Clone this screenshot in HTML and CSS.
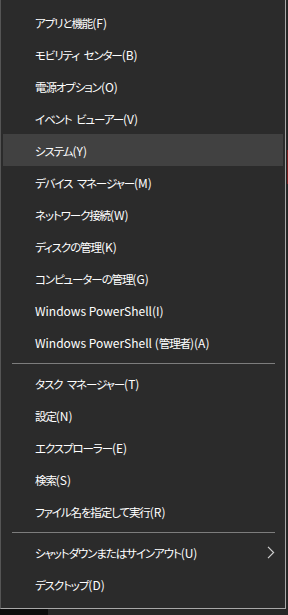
FILE: index.html
```html
<!DOCTYPE html>
<html lang="ja">
<head>
<meta charset="utf-8">
<title>Win+X menu</title>
<link rel="stylesheet" href="styles.css">
</head>
<body>
<div class="screen">
  <div class="menu">
    <ul class="group">
      <li class="item"><span class="label"><span class="j">アプリと機能</span>(F)</span></li>
      <li class="item"><span class="label"><span class="j">モビリティ センター</span>(B)</span></li>
      <li class="item"><span class="label"><span class="j">電源オプション</span>(O)</span></li>
      <li class="item"><span class="label"><span class="j">イベント ビューアー</span>(V)</span></li>
      <li class="item active"><span class="label"><span class="j">システム</span>(Y)</span></li>
      <li class="item"><span class="label"><span class="j">デバイス マネージャー</span>(M)</span></li>
      <li class="item"><span class="label"><span class="j">ネットワーク接続</span>(W)</span></li>
      <li class="item"><span class="label"><span class="j">ディスクの管理</span>(K)</span></li>
      <li class="item"><span class="label"><span class="j">コンピューターの管理</span>(G)</span></li>
      <li class="item"><span class="label">Windows PowerShell(I)</span></li>
      <li class="item"><span class="label">Windows PowerShell (<span class="j">管理者</span>)(A)</span></li>
    </ul>
    <div class="sep"></div>
    <ul class="group">
      <li class="item"><span class="label"><span class="j">タスク マネージャー</span>(T)</span></li>
      <li class="item"><span class="label"><span class="j">設定</span>(N)</span></li>
      <li class="item"><span class="label"><span class="j">エクスプローラー</span>(E)</span></li>
      <li class="item"><span class="label"><span class="j">検索</span>(S)</span></li>
      <li class="item"><span class="label"><span class="j">ファイル名を指定して実行</span>(R)</span></li>
    </ul>
    <div class="sep"></div>
    <ul class="group">
      <li class="item sub"><span class="label"><span class="j">シャットダウンまたはサインアウト</span>(U)</span>
        <svg class="chev" width="8" height="13" viewBox="0 0 8 13"><path d="M1 0.8 L6.6 6.5 L1 12.2" fill="none" stroke="#cfcfcf" stroke-width="1.2"/></svg>
      </li>
      <li class="item"><span class="label"><span class="j">デスクトップ</span>(D)</span></li>
    </ul>
  </div>
</div>
</body>
</html>
```
FILE: styles.css
```css
* { box-sizing: border-box; }
html, body { margin: 0; padding: 0; }
body {
  width: 288px;
  height: 615px;
  overflow: hidden;
  background: #1c1c1c;
  font-family: "Noto Sans CJK JP", "Noto Sans", sans-serif;
  font-feature-settings: "palt";
}
.screen {
  height: 615px;
  background:
    linear-gradient(#7a1f1f, #7a1f1f) 287px 150px / 1px 34px no-repeat,
    linear-gradient(#0d0d0d, #0d0d0d) 0 609px / 48px 6px no-repeat,
    #262626;
}
.menu {
  width: 286px;
  height: 609px;
  background: #2b2b2b;
  border-left: 1px solid #555;
  border-right: 1px solid #a8a8a8;
  border-bottom: 1px solid #a8a8a8;
  padding: 6px 2px 0 2px;
}
.group { list-style: none; margin: 0; padding: 0; }
.item {
  height: 32px;
  display: flex;
  align-items: center;
  padding-left: 32px;
  color: #ffffff;
  font-size: 12px;
}
.label { white-space: pre; }
.j {
  font-size: 11.5px;
  letter-spacing: -1.1px;
  word-spacing: 3px;
}
.item.active { background: #414141; }
.sub { justify-content: space-between; padding-right: 8px; }
.chev { display: block; }
.sep {
  height: 1px;
  background: #7d7d7d;
  margin: 5px 8px 3px 9px;
}
```
